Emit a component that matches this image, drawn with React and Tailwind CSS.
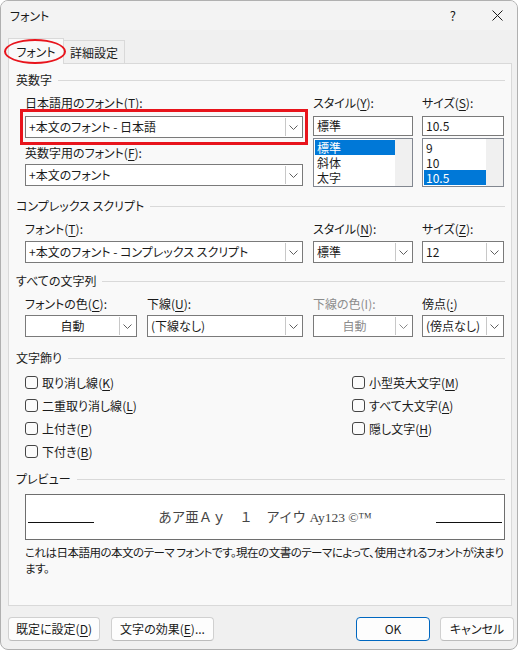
import React from 'react';

const font = "font-['Noto_Sans_CJK_JP','Noto_Sans',sans-serif] [font-feature-settings:'palt']";

const Key = ({ k }) => <><span>(</span><u className="underline-offset-[2px]">{k}</u><span>)</span></>;

const Chevron = ({ gray = false }) => (
  <svg width="9" height="5" viewBox="0 0 9 5" fill="none">
    <path d="M0.5 0.5 L4.5 4.5 L8.5 0.5" stroke={gray ? '#8a8a8a' : '#606060'} strokeWidth="1" />
  </svg>
);

const Combo = ({ w, value, center = false, disabled = false }) => (
  <div className={`${w} h-[22px] flex bg-white border border-[#7a7a7a] shrink-0`}>
    <div className={`flex-1 flex items-center px-[3px] text-[12px] whitespace-nowrap overflow-hidden ${center ? 'justify-center' : ''} ${disabled ? 'text-[#8c8c8c]' : 'text-[#1a1a1a]'}`}>
      {value}
    </div>
    <div className="w-[16px] my-[1px] mr-[1px] flex items-center justify-center border-l border-[#c8c8c8]">
      <Chevron gray={disabled} />
    </div>
  </div>
);

const Label = ({ children, disabled = false, className = '' }) => (
  <div className={`h-[16px] leading-[16px] text-[12px] whitespace-nowrap ${disabled ? 'text-[#8c8c8c]' : 'text-[#1a1a1a]'} ${className}`}>{children}</div>
);

const Section = ({ title, className = '' }) => (
  <div className={`flex items-center h-[16px] pl-[7px] pr-[6px] ${className}`}>
    <span className="text-[12px] leading-[16px] text-[#1a1a1a] whitespace-nowrap">{title}</span>
    <div className="flex-1 h-px bg-[#d9d9d9] ml-[6px]" />
  </div>
);

const ListBox = ({ w, items, selected }) => (
  <div className={`${w} h-[49px] flex bg-white border border-[#828790]`}>
    <div className="flex-1 flex flex-col pt-[1px] pl-[1px]">
      {items.map((it) => (
        <div
          key={it}
          className={`h-[15px] leading-[15px] text-[12px] px-[2px] ${it === selected ? 'bg-[#0078d7] text-white' : 'text-[#1a1a1a]'}`}
        >
          {it}
        </div>
      ))}
    </div>
    <div className="w-[17px] bg-[#f0f0f0]" />
  </div>
);

const Check = ({ label }) => (
  <div className="h-[23px] flex items-center">
    <div className="w-[13px] h-[13px] border border-[#454545] rounded-[3px] bg-[#fbfbfb]" />
    <span className="ml-[4px] text-[12px] text-[#1a1a1a] whitespace-nowrap">{label}</span>
  </div>
);

const Button = ({ w, children, primary = false }) => (
  <div
    className={`${w} h-[24px] flex items-center justify-center rounded-[4px] bg-[#fdfdfd] text-[12px] text-[#1a1a1a] whitespace-nowrap border ${primary ? 'border-[#0067c0]' : 'border-[#d0d0d0] border-b-[#bcbcbc]'}`}
  >
    {children}
  </div>
);

export default function App() {
  return (
    <div className={`w-[521px] h-[651px] bg-white ${font}`}>
      <div className="w-[518px] h-[650px] bg-[#f0f0f0] border border-[#b0b0b0] rounded-[8px] overflow-hidden flex flex-col">
        {/* Title bar */}
        <div className="h-[29px] flex items-center bg-[#f3f3f3] shrink-0">
          <span className="ml-[9px] text-[12px] text-[#1a1a1a]">フォント</span>
          <span className="ml-auto text-[13px] text-[#1a1a1a] mr-[36px]">?</span>
          <svg width="11" height="11" viewBox="0 0 11 11" className="mr-[14px]">
            <path d="M0.5 0.5 L10.5 10.5 M10.5 0.5 L0.5 10.5" stroke="#1a1a1a" strokeWidth="1" />
          </svg>
        </div>

        {/* Tabs */}
        <div className="h-[33px] flex items-end pl-[7px] shrink-0 relative">
          <div className="w-[56px] h-[26px] bg-[#f9f9f9] border border-b-0 border-[#d9d9d9] flex items-center justify-center text-[12px] text-[#1a1a1a] relative z-10 -mb-px">
            フォント
          </div>
          <div className="w-[61px] h-[23px] border border-l-0 border-b-0 border-[#d9d9d9] flex items-center justify-center text-[12px] text-[#1a1a1a] pt-[1px]">
            詳細設定
          </div>
          <div className="absolute left-[3px] top-[9px] w-[62px] h-[25px] border-2 border-[#e8141c] rounded-[50%] z-20" />
        </div>

        {/* Panel */}
        <div className="ml-[7px] w-[504px] h-[543px] bg-[#f9f9f9] border border-[#d9d9d9] flex flex-col shrink-0 relative">
          <Section title="英数字" className="mt-[8px]" />

          <div className="mt-[7px] pl-[16px] flex">
            <div className="w-[278px] flex flex-col">
              <Label>日本語用のフォント<Key k="T" />:</Label>
              <div className="mt-[5px] relative">
                <Combo w="w-[278px]" value="+本文のフォント - 日本語" />
                <div className="absolute -left-[5px] -top-[7px] w-[288px] h-[36px] border-[3px] border-[#e8141c]" />
              </div>
              <Label className="mt-[7px]">英数字用のフォント<Key k="F" />:</Label>
              <div className="mt-[3px]">
                <Combo w="w-[278px]" value="+本文のフォント" />
              </div>
            </div>
            <div className="w-[100px] ml-[10px] flex flex-col">
              <Label>スタイル<Key k="Y" />:</Label>
              <div className="mt-[5px] h-[20px] bg-white border border-[#7a7a7a] flex items-center px-[3px] text-[12px] text-[#1a1a1a]">標準</div>
              <div className="mt-[2px]">
                <ListBox w="w-[100px]" items={['標準', '斜体', '太字']} selected="標準" />
              </div>
            </div>
            <div className="w-[82px] ml-[9px] flex flex-col">
              <Label>サイズ<Key k="S" />:</Label>
              <div className="mt-[5px] h-[20px] bg-white border border-[#7a7a7a] flex items-center px-[3px] text-[12px] text-[#1a1a1a]">10.5</div>
              <div className="mt-[2px]">
                <ListBox w="w-[82px]" items={['9', '10', '10.5']} selected="10.5" />
              </div>
            </div>
          </div>

          <Section title="コンプレックス スクリプト" className="mt-[11px]" />
          <div className="mt-[7px] pl-[16px] flex">
            <div className="w-[278px] flex flex-col">
              <Label>フォント<Key k="T" />:</Label>
              <div className="mt-[4px]"><Combo w="w-[278px]" value="+本文のフォント - コンプレックス スクリプト" /></div>
            </div>
            <div className="w-[100px] ml-[10px] flex flex-col">
              <Label>スタイル<Key k="N" />:</Label>
              <div className="mt-[4px]"><Combo w="w-[100px]" value="標準" /></div>
            </div>
            <div className="w-[82px] ml-[9px] flex flex-col">
              <Label>サイズ<Key k="Z" />:</Label>
              <div className="mt-[4px]"><Combo w="w-[82px]" value="12" /></div>
            </div>
          </div>

          <Section title="すべての文字列" className="mt-[10px]" />
          <div className="mt-[7px] pl-[16px] flex">
            <div className="w-[112px] flex flex-col">
              <Label>フォントの色<Key k="C" />:</Label>
              <div className="mt-[3px]"><Combo w="w-[112px]" value="自動" center /></div>
            </div>
            <div className="w-[156px] ml-[10px] flex flex-col">
              <Label>下線<Key k="U" />:</Label>
              <div className="mt-[3px]"><Combo w="w-[156px]" value="(下線なし)" /></div>
            </div>
            <div className="w-[100px] ml-[10px] flex flex-col">
              <Label disabled>下線の色(I):</Label>
              <div className="mt-[3px]"><Combo w="w-[100px]" value="自動" center disabled /></div>
            </div>
            <div className="w-[82px] ml-[9px] flex flex-col">
              <Label>傍点<Key k=":" /></Label>
              <div className="mt-[3px]"><Combo w="w-[82px]" value="(傍点なし)" /></div>
            </div>
          </div>

          <Section title="文字飾り" className="mt-[13px]" />
          <div className="mt-[5px] pl-[16px] flex">
            <div className="w-[327px] flex flex-col">
              <Check label={<>取り消し線<Key k="K" /></>} />
              <Check label={<>二重取り消し線<Key k="L" /></>} />
              <Check label={<>上付き<Key k="P" /></>} />
              <Check label={<>下付き<Key k="B" /></>} />
            </div>
            <div className="flex flex-col">
              <Check label={<>小型英大文字<Key k="M" /></>} />
              <Check label={<>すべて大文字<Key k="A" /></>} />
              <Check label={<>隠し文字<Key k="H" /></>} />
            </div>
          </div>

          <Section title="プレビュー" className="mt-[8px]" />
          <div className="mt-[7px] ml-[16px] w-[480px] h-[46px] bg-white border border-[#6e6e6e] flex items-center px-[1px]">
            <div className="w-[66px] h-px bg-[#111] mt-[10px] ml-[1px]" />
            <div className="flex-1 text-center text-[13.5px] text-[#454545] font-['Liberation_Serif','Noto_Sans_CJK_JP',serif] whitespace-nowrap [font-feature-settings:normal] mt-[2px]">
              あア亜Ａｙ　１　アイウ Ay123 ©™
            </div>
            <div className="w-[66px] h-px bg-[#111] mt-[10px] mr-[1px]" />
          </div>
          <div className="mt-[4px] ml-[16px] w-[484px] text-[11.5px] leading-[16px] text-[#1a1a1a] whitespace-nowrap tracking-[-0.5px]">
            これは日本語用の本文のテーマ フォントです。現在の文書のテーマによって、使用されるフォントが決まり
            <br />
            ます。
          </div>
        </div>

        {/* Buttons */}
        <div className="mt-[11px] flex pl-[7px]">
          <Button w="w-[92px]">既定に設定<Key k="D" /></Button>
          <div className="ml-[11px]"><Button w="w-[103px]">文字の効果<Key k="E" />...</Button></div>
          <div className="ml-[142px]"><Button w="w-[74px]" primary>OK</Button></div>
          <div className="ml-[10px]"><Button w="w-[74px]">キャンセル</Button></div>
        </div>
      </div>
    </div>
  );
}
